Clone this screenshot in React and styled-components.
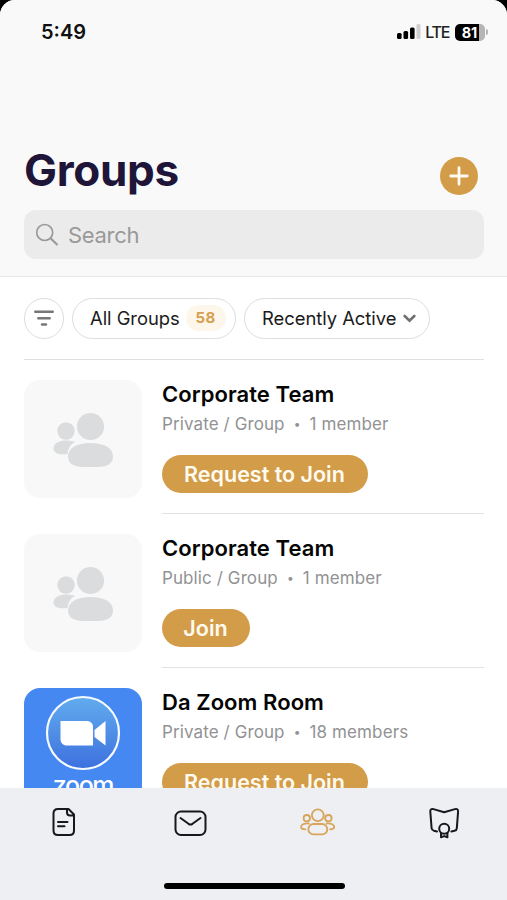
import React from "react";
import styled, { createGlobalStyle } from "styled-components";

const GlobalStyle = createGlobalStyle`
  * {
    box-sizing: border-box;
  }

  body {
    margin: 0;
    background-color: #000;
    font-family: Inter, 'Liberation Sans', sans-serif;
    overflow: hidden;
  }

  button {
    font-family: inherit;
    border: 0;
    padding: 0;
    background: none;
  }

  svg {
    display: block;
    flex-shrink: 0;
  }
`;

const Screen = styled.div`
  display: flex;
  flex-direction: column;
  width: 507px;
  height: 900px;
  overflow: hidden;
  background-color: #fff;
  border-radius: 15px 15px 0 0;
`;

const Header = styled.header`
  height: 277px;
  flex-shrink: 0;
  background-color: #f9f9f9;
  border-bottom: 1px solid #e6e6e7;
`;

const StatusBar = styled.div`
  display: flex;
  align-items: center;
  justify-content: space-between;
  height: 64px;
  padding: 0 19px 0 41px;
`;

const Time = styled.span`
  font-size: 20px;
  font-weight: 600;
  letter-spacing: 0;
  color: #111;
`;

const Status = styled.div`
  display: flex;
  align-items: center;
`;

const Network = styled.span`
  margin: 0 6px 0 4px;
  font-size: 16px;
  font-weight: 500;
  letter-spacing: -1.3px;
  color: #222;
`;

const Battery = styled.div`
  display: flex;
  align-items: center;
  justify-content: center;
  width: 30px;
  height: 17px;
  padding-right: 1px;
  border-radius: 5px;
  background: linear-gradient(to right, #000 24px, #b5b5b5 24px);
  color: #fff;
  font-size: 14.5px;
  font-weight: 700;
  letter-spacing: -0.2px;
`;

const BatteryTip = styled.div`
  width: 2px;
  height: 6px;
  margin-left: 1px;
  border-radius: 0 2px 2px 0;
  background-color: #b5b5b5;
`;

const TitleRow = styled.div`
  display: flex;
  align-items: center;
  justify-content: space-between;
  height: 60px;
  margin-top: 76px;
  padding: 0 29.5px 0 24px;
`;

const Title = styled.h1`
  margin: 0;
  font-size: 44px;
  line-height: 60px;
  font-weight: 700;
  letter-spacing: -0.3px;
  color: #1e1539;
`;

const AddButton = styled.button`
  display: flex;
  align-items: center;
  justify-content: center;
  width: 38px;
  height: 38px;
  margin-top: 11px;
  border-radius: 50%;
  background-color: #d29c48;
`;

const Search = styled.div`
  display: flex;
  align-items: center;
  height: 49px;
  margin: 10px 23px 0 24px;
  padding-left: 11px;
  border-radius: 12px;
  background-color: #ebebeb;
  color: #999;
  font-size: 22px;
  letter-spacing: -0.3px;

  span {
    margin-left: 9px;
  }
`;

const Content = styled.main`
  flex: 1;
  min-height: 0;
  overflow: hidden;
  padding: 21px 23px 0 24px;
`;

const Filters = styled.div`
  display: flex;
  gap: 8px;
  height: 62px;
  border-bottom: 1px solid #dfdfdf;
`;

const Pill = styled.button`
  display: flex;
  align-items: center;
  justify-content: ${props => props.$round ? "center" : "flex-start"};
  width: ${props => props.$width}px;
  height: 41px;
  padding-left: ${props => props.$round ? 0 : 17}px;
  padding-bottom: 1px;
  border: 1px solid #dedede;
  border-radius: 21px;
  background-color: #fff;
  font-size: 18.4px;
  letter-spacing: -0.03px;
  color: #1b1b1b;
  white-space: nowrap;

  svg {
    margin-left: ${props => props.$round ? 0 : 7}px;
  }
`;

const Count = styled.span`
  width: 40px;
  margin-left: 6px;
  border-radius: 13px;
  background-color: #fdf6ea;
  color: #d6a04f;
  font-size: 15px;
  font-weight: 700;
  line-height: 26px;
  letter-spacing: 0.6px;
  text-align: center;
`;

const Row = styled.article`
  display: flex;
  gap: 20px;
  height: 154px;
`;

const List = styled.section`
  padding-top: 20px;
`;

const Thumb = styled.div`
  display: flex;
  align-items: center;
  justify-content: center;
  flex-shrink: 0;
  width: 118px;
  height: 118px;
  border-radius: 16px;
  overflow: hidden;
  background-color: #f8f8f8;
`;

const ZoomThumb = styled(Thumb)`
  flex-direction: column;
  justify-content: flex-start;
  padding-top: 7px;
  background-color: #4688f1;
`;

const ZoomName = styled.span`
  margin-top: -2px;
  color: #fff;
  font-size: 25px;
  font-weight: 500;
  line-height: 32px;
  letter-spacing: -1.4px;
`;

const Info = styled.div`
  flex: 1;
  height: 134px;
  border-bottom: 1px solid ${props => props.$last ? "transparent" : "#e2e2e2"};
`;

const Name = styled.h2`
  margin: 0;
  font-size: 22px;
  font-weight: 600;
  line-height: 28px;
  letter-spacing: 0.06px;
  color: #050505;
`;

const Meta = styled.p`
  display: flex;
  margin: 4px 0 19px;
  font-size: 17px;
  line-height: 24px;
  letter-spacing: 0.1px;
  color: #919294;

  i {
    width: 25px;
    font-size: 12px;
    text-align: center;
    font-style: normal;
  }
`;

const JoinButton = styled.button`
  display: block;
  width: ${props => props.$width}px;
  height: 38px;
  margin-left: -0.5px;
  border-radius: 19px;
  background-color: #d29c48;
  color: #fffaf0;
  font-size: 21.5px;
  font-weight: 600;
  line-height: 38px;
  white-space: nowrap;
`;

const TabBar = styled.nav`
  display: flex;
  flex-direction: column;
  align-items: center;
  justify-content: space-between;
  flex-shrink: 0;
  height: 112px;
  padding: 16px 0 11px;
  background-color: #eeeff3;
`;

const Tabs = styled.div`
  display: flex;
  width: 100%;

  button {
    display: flex;
    justify-content: center;
    flex: 1;
  }
`;

const HomeIndicator = styled.div`
  width: 181px;
  height: 6px;
  margin-left: 1px;
  border-radius: 3px;
  background-color: #000;
`;

const PeopleIcon = () => (
  <svg width="62" height="56" viewBox="0 0 62 56" fill="#dadcde">
    <circle cx="14" cy="20" r="8.7" />
    <path d="M1.500 37.500C1.500 32 8 29.500 14 29.500c3.500 0 6.500.5 9 1.500-4.500 2.500-7 6-7.500 12C7.500 44 1.500 42.500 1.500 37.500Z" />
    <circle cx="38.500" cy="15.500" r="13.600" />
    <path d="M38.500 32C25 32 16 37 16 45.500c0 7 6 10.500 15 10.500h15c9 0 15-3.500 15-10.500C61 37 52 32 38.500 32Z" />
  </svg>
);

const groups = [
  { name: "Corporate Team", type: "Private / Group", members: "1 member", action: "Request to Join", width: 206 },
  { name: "Corporate Team", type: "Public / Group", members: "1 member", action: "Join", width: 88 },
  { name: "Da Zoom Room", type: "Private / Group", members: "18 members", action: "Request to Join", width: 206, zoom: true }
];

const ZoomLogo = () => (
  <ZoomThumb>
    <svg width="76" height="76" viewBox="0 0 76 76">
      <defs>
        <linearGradient id="disc" x1="0" y1="0" x2="0" y2="1">
          <stop offset="0" stopColor="#62acee" />
          <stop offset="1" stopColor="#3d70de" />
        </linearGradient>
      </defs>
      <circle cx="38" cy="38" r="36" fill="url(#disc)" stroke="#f4faff" strokeWidth="2.200" />
      <path d="M15.500 26h26c4 0 6.500 2.500 6.500 6v18.500H22c-4 0-6.500-2.500-6.500-6.500V26Z" fill="#fff" />
      <path d="M49.500 35l11-9v24.500L49.500 42Z" fill="#fff" />
    </svg>
    <ZoomName>zoom</ZoomName>
  </ZoomThumb>
);

function App() {
  return (
    <>
      <GlobalStyle />
      <Screen>
        <Header>
          <StatusBar>
            <Time>5:49</Time>
            <Status>
              <svg width="24" height="16" viewBox="0 0 24 16">
                <rect x="0" y="9" width="4.600" height="6" rx="1.500" />
                <rect x="6.500" y="7" width="4.600" height="8" rx="1.500" />
                <rect x="13" y="3.500" width="4.600" height="11.500" rx="1.500" />
                <rect x="19.500" y="0" width="4" height="15" rx="1.500" fill="#cfcfcf" />
              </svg>
              <Network>LTE</Network>
              <Battery>81</Battery>
              <BatteryTip />
            </Status>
          </StatusBar>
          <TitleRow>
            <Title>Groups</Title>
            <AddButton aria-label="Add group">
              <svg width="20" height="20" viewBox="0 0 20 20" stroke="#fffaf0" strokeWidth="2.800" strokeLinecap="round">
                <path d="M10 1.700v16.600M1.700 10h16.600" />
              </svg>
            </AddButton>
          </TitleRow>
          <Search>
            <svg width="24" height="24" viewBox="0 0 24 24" fill="none" stroke="#999" strokeWidth="1.700">
              <circle cx="9.700" cy="9.500" r="8" />
              <path d="M15.500 15.300l7 6.700" strokeWidth="2.200" />
            </svg>
            <span>Search</span>
          </Search>
        </Header>
        <Content>
          <Filters>
            <Pill $round $width={40} aria-label="Filter">
              <svg width="20" height="16" viewBox="0 0 20 16" stroke="#777" strokeWidth="2.500" strokeLinecap="round">
                <path d="M1.300 1.700h17.400M4.300 8.300h11.400M8 14.500h4" />
              </svg>
            </Pill>
            <Pill $width={164}>
              All Groups
              <Count>58</Count>
            </Pill>
            <Pill $width={186}>
              Recently Active
              <svg width="13" height="9" viewBox="0 0 13 9" fill="none" stroke="#707070" strokeWidth="2.600" strokeLinecap="round">
                <path d="M1.700 2l4.800 4.700L11.300 2" />
              </svg>
            </Pill>
          </Filters>
          <List>
            {groups.map((group, i) => (
              <Row key={i}>
                {group.zoom ? <ZoomLogo /> : <Thumb><PeopleIcon /></Thumb>}
                <Info $last={group.zoom}>
                  <Name>{group.name}</Name>
                  <Meta>{group.type}<i>•</i>{group.members}</Meta>
                  <JoinButton $width={group.width}>{group.action}</JoinButton>
                </Info>
              </Row>
            ))}
          </List>
        </Content>
        <TabBar>
          <Tabs>
            <button aria-label="Posts">
              <svg width="34" height="36" viewBox="0 0 34 36" fill="none" stroke="#17181d" strokeWidth="2" strokeLinecap="round" strokeLinejoin="round">
                <path d="M22.500 5H12C9 5 7.500 6.500 7.500 9.500v17C7.500 29.500 9 31 12 31h11.500c3 0 4.500-1.500 4.500-4.500V10.500L22.500 5ZM21 5v3.500c0 2 .8 3 3 3h4M12 18h9.500M12 22.200h6.500" />
              </svg>
            </button>
            <button aria-label="Messages">
              <svg width="34" height="36" viewBox="0 0 34 36" fill="none" stroke="#17181d" strokeWidth="2" strokeLinecap="round" strokeLinejoin="round">
                <rect x="2.500" y="7.500" width="30" height="23.500" rx="5.500" />
                <path d="M7.500 14l8 5.800c1.500 1 2.500 1 4 0l8-5.800" />
              </svg>
            </button>
            <button aria-label="Groups">
              <svg width="36" height="36" viewBox="0 0 36 36" fill="none" stroke="#d7a45a" strokeWidth="1.800" strokeLinecap="round">
                <circle cx="18.800" cy="11.200" r="5.900" />
                <rect x="9.300" y="20" width="19" height="10.400" rx="5.200" />
                <circle cx="7.800" cy="14.200" r="3.200" />
                <circle cx="29.400" cy="14.200" r="3.200" />
                <path d="M9.800 19.500c-5-.3-7.700 1.200-7.700 3.500 0 1.500 1.500 2.300 4.200 2.300M27.500 19.500c5-.3 7.700 1.200 7.700 3.500 0 1.500-1.500 2.300-4.200 2.300" />
              </svg>
            </button>
            <button aria-label="Courses">
              <svg width="34" height="38" viewBox="0 0 34 38" fill="none" stroke="#17181d" strokeWidth="2" strokeLinecap="round" strokeLinejoin="round">
                <path d="M10 27.500L7 26.800c-1.500-.4-2.300-1-2.400-2.500L3.300 7.500C3.200 5.200 4.500 4.500 6.500 5.100L17.200 8.200l10.700-3.100c2-.6 3.300.1 3.200 2.400l-1.300 16.800c-.1 1.500-.9 2.100-2.400 2.500l-3 .7" />
                <circle cx="17.200" cy="24.700" r="5" />
                <path d="M14 29v4.300l3.200-1.200 3.200 1.200V29" />
              </svg>
            </button>
          </Tabs>
          <HomeIndicator />
        </TabBar>
      </Screen>
    </>
  );
}

export default App;
